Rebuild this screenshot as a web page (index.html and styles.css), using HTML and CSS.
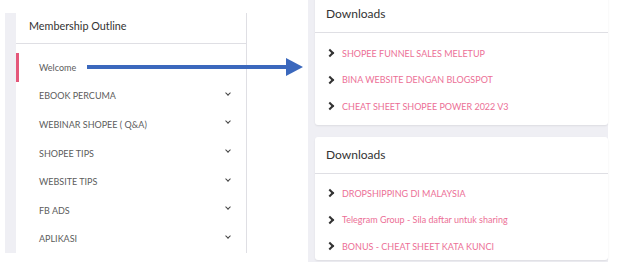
FILE: index.html
```html
<!DOCTYPE html>
<html lang="ms">
<head>
    <meta charset="UTF-8">
    <title>Membership</title>
    <link rel="stylesheet" href="styles.css">
</head>
<body>
    <div class="page">
        <aside class="outline-wrap">
            <div class="outline">
                <h2 class="outline-title">Membership Outline</h2>
                <ul class="outline-list">
                    <li class="outline-item active">Welcome</li>
                    <li class="outline-item">EBOOK PERCUMA <span class="caret"></span></li>
                    <li class="outline-item">WEBINAR SHOPEE ( Q&amp;A) <span class="caret"></span></li>
                    <li class="outline-item">SHOPEE TIPS <span class="caret"></span></li>
                    <li class="outline-item">WEBSITE TIPS <span class="caret"></span></li>
                    <li class="outline-item">FB ADS <span class="caret"></span></li>
                    <li class="outline-item">APLIKASI <span class="caret"></span></li>
                </ul>
            </div>
        </aside>

        <main class="downloads-wrap">
            <section class="card first">
                <h3 class="card-title">Downloads</h3>
                <ul class="dl-list">
                    <li><a href="#">SHOPEE FUNNEL SALES MELETUP</a></li>
                    <li><a href="#">BINA WEBSITE DENGAN BLOGSPOT</a></li>
                    <li><a href="#">CHEAT SHEET SHOPEE POWER 2022 V3</a></li>
                </ul>
            </section>
            <section class="card">
                <h3 class="card-title">Downloads</h3>
                <ul class="dl-list">
                    <li><a href="#">DROPSHIPPING DI MALAYSIA</a></li>
                    <li><a href="#">Telegram Group - Sila daftar untuk sharing</a></li>
                    <li><a href="#">BONUS - CHEAT SHEET KATA KUNCI</a></li>
                </ul>
            </section>
        </main>

        <!-- annotation arrow drawn over the screenshot -->
        <svg class="arrow" width="220" height="20" viewBox="0 0 220 20">
            <rect x="0" y="7" width="202" height="4" fill="#3b68bd"/>
            <polygon points="199,0 216,9 199,18" fill="#3b68bd"/>
        </svg>
    </div>
</body>
</html>
```

FILE: styles.css
```css
:root {
    --bg-grey: #efeff4; --line: #dfdfe4; --pink: #ec6f96; --bar: #e4577a;
    --text-dark: #333; --text-mid: #5c5c5c;
}
* { box-sizing: border-box; margin: 0; padding: 0; }
body { font-family: 'Lato', 'Open Sans', sans-serif; background: #fff; color: var(--text-dark); }
ul { list-style: none; }
.page { position: relative; display: flex; height: 262px; overflow: hidden; }

.outline-wrap { margin: 13px 0 0 5px; padding-left: 11px; background: var(--bg-grey); height: 240px; }
.outline { width: 231px; height: 100%; background: #fff; border-right: 1px solid var(--line); }
.outline-title {
    font-size: 10.8px; font-weight: 400; color: var(--text-dark);
    padding: 6px 13px 0; height: 31px; border-bottom: 1px solid var(--line);
}
.outline-list { padding-top: 9px; }
.outline-item {
    display: flex; justify-content: space-between; align-items: center;
    height: 28.6px; padding: 0 16px 0 23px; font-size: 9px; color: var(--text-mid);
}
.outline-item.active { box-shadow: inset 3px 0 0 var(--bar); }
.caret {
    width: 4px; height: 4px; margin-bottom: 6px;
    border-right: 1.5px solid #444; border-bottom: 1.5px solid #444; transform: rotate(45deg);
}

.downloads-wrap { margin-left: 61px; padding-left: 7px; width: 300px; background: var(--bg-grey); }
.card { background: #fff; border-radius: 3px; box-shadow: 0 1px 2px rgba(0, 0, 0, 0.08); }
.card.first { margin-top: -8px; height: 133px; margin-bottom: 12px; border-radius: 0 0 3px 3px; }
.card-title {
    font-size: 12px; font-weight: 400; color: var(--text-dark);
    padding: 14px 11px 0; height: 41px; border-bottom: 1px solid var(--line);
}
.card:not(.first) .card-title { padding-top: 10px; height: 37px; }
.card:not(.first) .dl-list { padding-top: 6px; }
.dl-list { padding-top: 7px; }
.dl-list li { height: 26.5px; display: flex; align-items: center; padding-left: 12px; font-size: 9px; }
.dl-list li::before {
    content: ''; width: 4px; height: 4px; margin-right: 9px;
    border-right: 2px solid #333; border-top: 2px solid #333; transform: rotate(45deg);
}
.dl-list a { color: var(--pink); text-decoration: none; }

.arrow { position: absolute; left: 87px; top: 58px; }
```
